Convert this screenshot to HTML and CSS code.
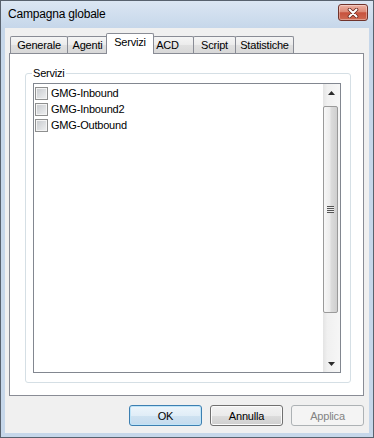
FILE: index.html
```html
<!doctype html>
<html lang="it">
    <head>
        <meta charset="UTF-8" />
        <title>Campagna globale</title>
        <link rel="stylesheet" href="styles.css">
    </head>
    <body>
        <div class="window">
            <div class="titlebar">
                <span class="title">Campagna globale</span>
                <button class="close" title="Chiudi">
                    <svg width="12" height="10" viewBox="0 0 12 10">
                        <path d="M2.5 1.5 L9.5 8.5 M9.5 1.5 L2.5 8.5" stroke="#6b2a20" stroke-width="3.6" stroke-linecap="round" />
                        <path d="M2.5 1.5 L9.5 8.5 M9.5 1.5 L2.5 8.5" stroke="#ffffff" stroke-width="2" stroke-linecap="round" />
                    </svg>
                </button>
            </div>
            <div class="frame">
                <div class="client">
                    <div class="tabs">
                        <div class="tab">Generale</div>
                        <div class="tab">Agenti</div>
                        <div class="tab active">Servizi</div>
                        <div class="tab tab-acd">ACD</div>
                        <div class="tab">Script</div>
                        <div class="tab">Statistiche</div>
                    </div>

                    <div class="panel">
                        <div class="group">
                            <span class="group-label">Servizi</span>
                            <div class="listbox">
                                <ul class="items">
                                    <li><span class="check"></span>GMG-Inbound</li>
                                    <li><span class="check"></span>GMG-Inbound2</li>
                                    <li><span class="check"></span>GMG-Outbound</li>
                                </ul>
                                <div class="scrollbar">
                                    <div class="sb-btn">
                                        <svg width="7" height="4" viewBox="0 0 7 4"><polygon points="0,4 7,4 3.5,0" fill="#2b2b2b" /></svg>
                                    </div>
                                    <div class="sb-track">
                                        <div class="sb-thumb"><span class="grip"></span></div>
                                    </div>
                                    <div class="sb-btn">
                                        <svg width="7" height="4" viewBox="0 0 7 4"><polygon points="0,0 7,0 3.5,4" fill="#2b2b2b" /></svg>
                                    </div>
                                </div>
                            </div>
                        </div>
                    </div>

                    <div class="buttons">
                        <button class="btn btn-default">OK</button>
                        <button class="btn">Annulla</button>
                        <button class="btn" disabled>Applica</button>
                    </div>
                </div>
            </div>
        </div>
    </body>
</html>
```

FILE: styles.css
```css
body {
    margin: 0;
    padding: 0;
    font-family: "Liberation Sans", Arial, sans-serif;
    font-size: 11px;
    letter-spacing: -0.2px;
    color: #000;
}

.window {
    width: 374px;
    height: 438px;
    box-sizing: border-box;
    border: 1px solid #58626e;
    background: #c6d7ea;
    display: flex;
    flex-direction: column;
}

.titlebar {
    height: 27px;
    display: flex;
    justify-content: space-between;
    align-items: flex-start;
    padding: 0 5px 0 7px;
    background: linear-gradient(#dbe6f3, #c6d7ea);
}
.title {
    font-size: 12px;
    line-height: 27px;
}
.close {
    width: 30px;
    height: 17px;
    margin-top: 3px;
    padding: 0;
    border: 1px solid #70332b;
    border-radius: 3px;
    background: linear-gradient(#eeb2a4, #dc8a77 45%, #c7523d 52%, #cf6a52);
    box-shadow: inset 0 0 0 1px rgba(255, 255, 255, 0.35);
    display: flex;
    justify-content: center;
    align-items: center;
}

.frame {
    flex: 1;
    display: flex;
    padding: 0 4px 4px;
}
.client {
    flex: 1;
    display: flex;
    flex-direction: column;
    background: #f0f0f0;
}

/* tab strip */
.tabs {
    height: 25px;
    display: flex;
    align-items: flex-end;
    padding-left: 5px;
}
.tab {
    box-sizing: border-box;
    height: 17px;
    margin-left: -1px;
    border: 1px solid #898c95;
    border-bottom: none;
    border-radius: 2px 2px 0 0;
    background: linear-gradient(#f5f5f5, #ebebeb 50%, #e0e0e0 50%, #d8d8d8);
    line-height: 16px;
    text-align: center;
    white-space: nowrap;
}
.tab:nth-child(1) { width: 58px; margin-left: 0; }
.tab:nth-child(2) { width: 41px; }
.tab:nth-child(3) { width: 48px; }
.tab:nth-child(4) { width: 41px; }
.tab:nth-child(5) { width: 43px; }
.tab:nth-child(6) { width: 59px; }
.tab-acd {
    padding-right: 12px;
}
.tab.active {
    position: relative;
    z-index: 2;
    height: 21px;
    margin-left: -2px;
    margin-bottom: -1px;
    background: #fff;
}

.panel {
    flex: 1;
    display: flex;
    margin: 0 5px 0 4px;
    padding: 19px 12px 12px 15px;
    border: 1px solid #898c95;
    background: #fff;
}

.group {
    flex: 1;
    display: flex;
    position: relative;
    padding: 9px 9px 9px 7px;
    border: 1px solid #d5dfe5;
    border-radius: 3px;
}
.group-label {
    position: absolute;
    top: -7px;
    left: 6px;
    padding: 0 1px;
    line-height: 13px;
    background: #fff;
}

.listbox {
    flex: 1;
    display: flex;
    border: 1px solid #828790;
    background: #fff;
}
.items {
    flex: 1;
    list-style: none;
    margin: 0;
    padding: 1px 0 0 1px;
}
.items li {
    height: 16px;
    display: flex;
    align-items: center;
    gap: 3px;
}
.check {
    flex: none;
    width: 13px;
    height: 13px;
    box-sizing: border-box;
    border: 1px solid #8e8f8f;
    background: linear-gradient(135deg, #c6c9cd, #f0f1f2);
    box-shadow: inset 0 0 0 1px #f4f4f4;
}

.scrollbar {
    width: 17px;
    display: flex;
    flex-direction: column;
    background: linear-gradient(to right, #e4e4e4, #f0f0f0 25%, #f6f6f6);
}
.sb-btn {
    height: 17px;
    display: flex;
    justify-content: center;
    align-items: center;
}
.sb-track {
    flex: 1;
    padding: 5px 2px 0 0;
}
.sb-thumb {
    height: 207px;
    box-sizing: border-box;
    border: 1px solid #9a9a9a;
    border-radius: 2px;
    background: linear-gradient(to right, #f7f7f7, #ececec 45%, #dcdcdc 55%, #cfcfcf);
    display: flex;
    justify-content: center;
    align-items: center;
}
.grip {
    width: 7px;
    height: 7px;
    background: repeating-linear-gradient(#555 0 1px, #ededed 1px 2px);
}

.buttons {
    display: flex;
    justify-content: flex-end;
    gap: 8px;
    margin: 9px 5px 7px 0;
}
.btn {
    width: 73px;
    height: 21px;
    padding: 0;
    border: 1px solid #707070;
    border-radius: 3px;
    background: linear-gradient(#f2f2f2, #ebebeb 50%, #dddddd 50%, #cfcfcf);
    box-shadow: inset 0 0 0 1px #fbfbfb;
    font-family: inherit;
    font-size: 11px;
    letter-spacing: inherit;
    color: #000;
}
.btn-default {
    border-color: #3c7fb1;
    background: linear-gradient(#edf5fb, #e0edf7 50%, #cfe2f1 50%, #c4dbee);
    box-shadow: inset 0 0 0 1px #bfe4f8;
}
.btn:disabled {
    border-color: #adb2b5;
    background: #f4f4f4;
    box-shadow: none;
    color: #838383;
}
```
